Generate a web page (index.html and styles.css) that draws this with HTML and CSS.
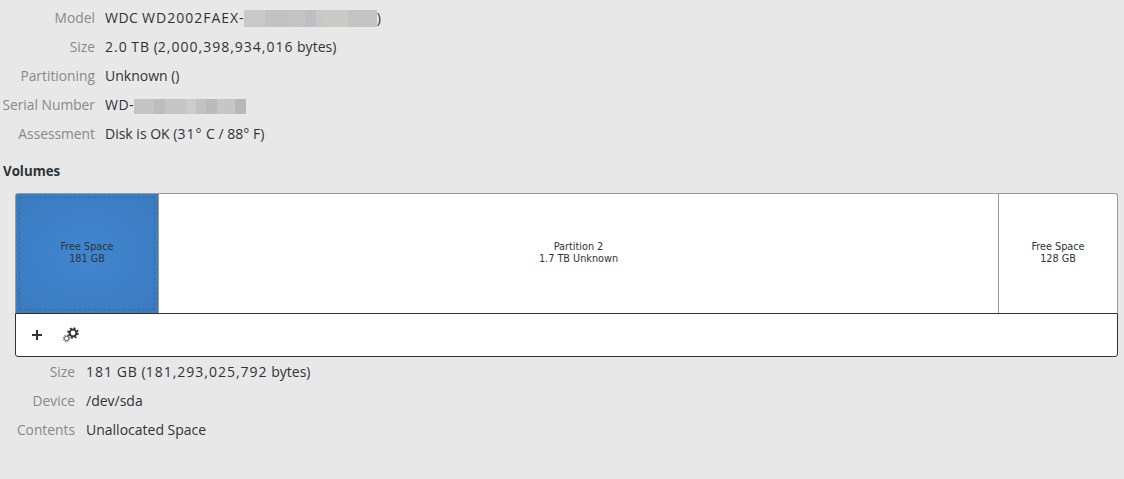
FILE: index.html
```html
<!DOCTYPE html>
<html lang="en">
<head>
    <meta charset="UTF-8">
    <title>Disks</title>
    <link rel="stylesheet" href="styles.css">
</head>
<body>
  <div class="info disk_info">
    <div class="label">Model</div>
    <div class="value"><span class="caps">WDC</span> <span class="num">WD2002FAEX</span>-<span class="blur blur_model"></span>)</div>
    <div class="label">Size</div>
    <div class="value"><span class="num">2.0</span> <span class="num">TB</span> (<span class="num">2,000,398,934,016</span> bytes)</div>
    <div class="label">Partitioning</div>
    <div class="value">Unknown ()</div>
    <div class="label">Serial Number</div>
    <div class="value"><span class="caps">WD-</span><span class="blur blur_serial"></span></div>
    <div class="label">Assessment</div>
    <div class="value">Disk is OK (<span class="num">31°</span> C / 88° F)</div>
  </div>

  <h2 class="title">Volumes</h2>

  <div class="volumes">
    <div class="bar">
      <div class="part part_free selected">
        <div class="focus">Free Space<br>181 GB</div>
      </div>
      <div class="part part_main">Partition 2<br>1.7 TB Unknown</div>
      <div class="part part_last">Free Space<br>128 GB</div>
    </div>
    <div class="toolbar">
      <svg class="icon_plus" width="12" height="12" viewBox="0 0 12 12">
        <path d="M1 6H11M6 1V11" stroke="#2e3436" stroke-width="2" fill="none"/>
      </svg>
      <svg class="icon_gears" width="18" height="16" viewBox="0 0 18 16">
        <circle cx="11" cy="6" r="3.4" fill="none" stroke="#2e3436" stroke-width="2"/>
        <circle cx="11" cy="6" r="5" fill="none" stroke="#2e3436" stroke-width="1.6" stroke-dasharray="2 1.93"/>
        <circle cx="4.5" cy="11.5" r="2.2" fill="none" stroke="#555753" stroke-width="1"/>
        <circle cx="4.5" cy="11.5" r="3.3" fill="none" stroke="#555753" stroke-width="1" stroke-dasharray="1.3 1.3"/>
      </svg>
    </div>
  </div>

  <div class="info part_info">
    <div class="label">Size</div>
    <div class="value"><span class="num">181</span> <span class="num">GB</span> (<span class="num">181,293,025,792</span> bytes)</div>
    <div class="label">Device</div>
    <div class="value">/dev/sda</div>
    <div class="label">Contents</div>
    <div class="value">Unallocated Space</div>
  </div>
</body>
</html>
```

FILE: styles.css
```css
*{
  margin:0;
  padding:0;
  box-sizing: border-box;
}
body{
  background: #e8e8e8;
  color: #2e3436;
  font-family: "Open Sans", "Noto Sans", sans-serif;
  font-size: 14px;
  overflow: hidden;
}
.info{
  display: grid;
  grid-auto-rows: 29px;
  align-items: center;
  column-gap: 10px;
}
.disk_info{
  grid-template-columns: 95px 1fr;
  padding-top: 3px;
}
.part_info{
  grid-template-columns: 75px 1fr;
  column-gap: 11px;
}
.label{
  text-align: right;
  color: #888a85;
  font-size: 13.8px;
  white-space: nowrap;
}
.value{
  white-space: nowrap;
}
/* digits are wider in the original font */
.num{
  letter-spacing: 1px;
}
.caps{
  letter-spacing: 0.5px;
}
.blur{
  display: inline-block;
  vertical-align: middle;
  background: linear-gradient(90deg, #c9c9c7 0 16%, #c2c2c2 16% 34%, #c4c4c4 34% 46%, #bcc0c0 46% 54%, #c8c8c8 54% 62%, #cccac6 62% 78%, #c4c4c2 78% 100%);
}
.blur_model{
  width: 133px;
  height: 17px;
}
.blur_serial{
  width: 112px;
  height: 15px;
  background: linear-gradient(90deg, #c4c4c4 0 18%, #bdbdbd 18% 28%, #c6c6c2 28% 46%, #cccccc 46% 55%, #c2c2c2 55% 64%, #bbbbbb 64% 74%, #c6c6c6 74% 90%, #b8b8b8 90% 100%);
}
.title{
  font-size: 13.3px;
  font-weight: 700;
  line-height: 18px;
  padding: 14px 0 0 3px;
  height: 45px;
}
.volumes{
  width: 1103px;
  margin-left: 15px;
}
.bar{
  display: flex;
  height: 120px;
  background: #fff;
  border: 1px solid #9a9a9a;
  border-bottom: 0;
  border-radius: 3px 3px 0 0;
}
.part{
  display: flex;
  align-items: center;
  justify-content: center;
  text-align: center;
  font-family: "DejaVu Sans", sans-serif;
  font-size: 9.7px;
  line-height: 12px;
  padding-bottom: 1px;
}
.part_free{
  width: 143px;
  border-right: 1px solid #9a9a9a;
}
.selected{
  padding: 3px;
  background: radial-gradient(ellipse at center, #4086d0 0%, #3b7abf 100%);
}
.focus{
  flex: 1;
  align-self: stretch;
  display: flex;
  align-items: center;
  justify-content: center;
  border: 1px dashed #356ba5;
  padding-bottom: 1px;
}
.part_main{
  width: 840px;
  border-right: 1px solid #9a9a9a;
}
.part_last{
  flex: 1;
}
.toolbar{
  display: flex;
  align-items: center;
  height: 44px;
  background: #fff;
  border: 1px solid #2e3436;
  border-radius: 0 0 3px 3px;
  padding-left: 15px;
}
.icon_plus{
  margin-right: 19px;
}
```
